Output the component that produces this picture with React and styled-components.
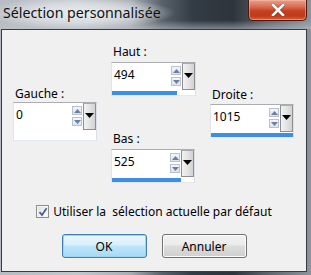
import React from "react";
import styled, { createGlobalStyle } from "styled-components";

const Global = createGlobalStyle`
  html, body { margin: 0; padding: 0; }
  body { width: 311px; height: 275px; overflow: hidden; font-family: "Noto Sans", "DejaVu Sans", sans-serif; }
  * { box-sizing: border-box; }
`;

const Window = styled.div`
  width: 311px;
  height: 275px;
  display: flex;
  flex-direction: column;
  background:
    linear-gradient(to right, #b7bcc2 0%, #c3c7cc 25%, #a9aeb4 42%, #59616a 52%, #333b44 62%, #2d343c 75%, #5d646c 86%, #8e949b 100%);
`;

const TitleBar = styled.div`
  height: 29px;
  flex: none;
  display: flex;
  align-items: flex-start;
  justify-content: space-between;
  background:
    radial-gradient(ellipse 95px 16px at 80px 13px, rgba(235, 238, 241, 0.95) 0%, rgba(225, 229, 233, 0.75) 55%, rgba(210, 214, 219, 0) 100%),
    linear-gradient(to bottom, rgba(255, 255, 255, 0) 0%, rgba(255, 255, 255, 0) 70%, rgba(190, 196, 203, 0.55) 100%);
`;

const Title = styled.div`
  padding: 4px 0 0 3px;
  font-size: 14.2px;
  line-height: 18px;
  color: #111;
  white-space: nowrap;
`;

const CloseButton = styled.div`
  width: 59px;
  height: 21px;
  margin-right: 4px;
  border: 1px solid #4a1a10;
  border-top: none;
  border-radius: 0 0 5px 5px;
  background: linear-gradient(to bottom, #e8a08c 0%, #d76a4f 35%, #c4401f 55%, #c23a19 80%, #d9623d 100%);
  box-shadow: inset 0 0 0 1px rgba(255, 200, 180, 0.45);
  display: flex;
  align-items: center;
  justify-content: center;
`;

const Client = styled.div`
  flex: 1;
  margin: 0 4px 3px 1px;
  border: 1px solid #343c45;
  background: #f0f0f0;
  display: flex;
  flex-direction: column;
  align-items: center;
  padding-top: 14px;
  font-size: 12px;
  color: #000;
`;

const Fields = styled.div`
  display: flex;
  align-items: flex-start;
  justify-content: center;
  gap: 14px;
  width: 100%;
  padding-right: 1px;
`;

const Column = styled.div`
  display: flex;
  flex-direction: column;
  padding-top: ${(p) => p.$top || 0}px;
  gap: 35px;
`;

const FieldWrap = styled.div`
  display: flex;
  flex-direction: column;
`;

const Label = styled.div`
  font-size: 12px;
  line-height: 15px;
  padding-left: 2px;
  margin-bottom: ${(p) => p.$gap}px;
  white-space: nowrap;
`;

const Box = styled.div`
  width: ${(p) => p.$w}px;
  display: flex;
  flex-direction: column;
  background: #fff;
  border: 1px solid #abadb3;
  border-left-color: #e2e3ea;
  border-right-color: #dbdfe6;
  border-bottom-color: #e3e9ef;
`;

const BoxRow = styled.div`
  height: 27px;
  display: flex;
  align-items: stretch;
`;

const Value = styled.div`
  flex: 1;
  padding: 4px 0 0 2px;
  font-size: 12px;
  line-height: 15px;
`;

const Spin = styled.div`
  width: 10px;
  display: flex;
  flex-direction: column;
  gap: 2px;
  padding-top: 3px;
  margin-right: 1px;
`;

const SpinBtn = styled.div`
  height: 9px;
  border: 1px solid #b9c1cc;
  background: linear-gradient(to bottom, #f4f6f9, #dde3ea);
  display: flex;
  align-items: center;
  justify-content: center;
`;

const DropBtn = styled.div`
  width: 13px;
  border: 1px solid #8c8f94;
  border-top-color: #a9abaf;
  background: linear-gradient(to right, #f2f2f2 0%, #e4e4e4 50%, #d2d2d2 100%);
  display: flex;
  justify-content: center;
  padding-top: 9px;
`;

const Track = styled.div`
  height: ${(p) => p.$h}px;
  padding-top: 1px;
  background: #fff;
  display: flex;
`;

const Fill = styled.div`
  height: 4px;
  background: #3b8fe5;
`;

const CheckRow = styled.div`
  margin-top: 20px;
  display: flex;
  align-items: center;
  gap: 4px;
  height: 17px;
`;

const CheckBox = styled.div`
  width: 13px;
  height: 13px;
  border: 1px solid #8e8f8f;
  background: linear-gradient(135deg, #dcdcdc 0%, #f4f4f4 60%, #fff 100%);
  box-shadow: inset 0 0 0 1px #f5f5f5;
  display: flex;
  align-items: center;
  justify-content: center;
`;

const CheckText = styled.span`
  font-size: 12px;
  white-space: pre;
`;

const ButtonRow = styled.div`
  margin-top: 14px;
  display: flex;
  gap: 15px;
`;

const Button = styled.div`
  width: 85px;
  height: 24px;
  border-radius: 3px;
  display: flex;
  align-items: center;
  justify-content: center;
  font-size: 12px;
  border: 1px solid ${(p) => (p.$default ? "#3c7fb1" : "#707070")};
  background: ${(p) =>
    p.$default
      ? "linear-gradient(to bottom, #eaf6fd 0%, #d9f0fc 45%, #bee6fd 50%, #a7d9f5 100%)"
      : "linear-gradient(to bottom, #f2f2f2 0%, #ebebeb 45%, #dddddd 50%, #cfcfcf 100%)"};
  box-shadow: inset 0 0 0 1px ${(p) => (p.$default ? "#9fd3f1" : "#fcfcfc")};
`;

const UpArrow = () => (
  <svg width="7" height="4" viewBox="0 0 7 4"><path d="M0 4 L3.5 0 L7 4 Z" fill="#6b7fa6" /></svg>
);
const DownArrow = () => (
  <svg width="7" height="4" viewBox="0 0 7 4"><path d="M0 0 L3.5 4 L7 0 Z" fill="#6b7fa6" /></svg>
);

function Field({ label, value, pct, width, gap, track = 5 }) {
  return (
    <FieldWrap>
      <Label $gap={gap}>{label}</Label>
      <Box $w={width}>
        <BoxRow>
          <Value>{value}</Value>
          <Spin>
            <SpinBtn><UpArrow /></SpinBtn>
            <SpinBtn><DownArrow /></SpinBtn>
          </Spin>
          <DropBtn>
            <svg width="9" height="5" viewBox="0 0 9 5"><path d="M0 0 L9 0 L4.5 5 Z" fill="#000" /></svg>
          </DropBtn>
        </BoxRow>
        <Track $h={track}>
          <Fill style={{ width: `${pct}%` }} />
        </Track>
      </Box>
    </FieldWrap>
  );
}

export default function App() {
  return (
    <>
      <Global />
      <Window>
        <TitleBar>
          <Title>Sélection personnalisée</Title>
          <CloseButton>
            <svg width="14" height="12" viewBox="0 0 14 12">
              <path d="M2 1 L12 11 M12 1 L2 11" stroke="#3a1008" strokeWidth="4" strokeLinecap="square" opacity="0.35" />
              <path d="M2 1 L12 11 M12 1 L2 11" stroke="#fff" strokeWidth="2.6" strokeLinecap="square" />
            </svg>
          </CloseButton>
        </TitleBar>
        <Client>
          <Fields>
            <Column $top={42}>
              <Field label="Gauche :" value="0" pct={0} width={84} gap={1} track={10} />
            </Column>
            <Column>
              <Field label="Haut :" value="494" pct={78} width={85} gap={3} />
              <Field label="Bas :" value="525" pct={84} width={84} gap={3} />
            </Column>
            <Column $top={43}>
              <Field label="Droite :" value="1015" pct={100} width={84} gap={2} />
            </Column>
          </Fields>
          <CheckRow>
            <CheckBox>
              <svg width="10" height="10" viewBox="0 0 10 10">
                <path d="M1.5 5.2 L4 8 L8.6 1.2" stroke="#4a5f97" strokeWidth="1.8" fill="none" />
              </svg>
            </CheckBox>
            <CheckText>Utiliser la  sélection actuelle par défaut</CheckText>
          </CheckRow>
          <ButtonRow>
            <Button $default>OK</Button>
            <Button>Annuler</Button>
          </ButtonRow>
        </Client>
      </Window>
    </>
  );
}
